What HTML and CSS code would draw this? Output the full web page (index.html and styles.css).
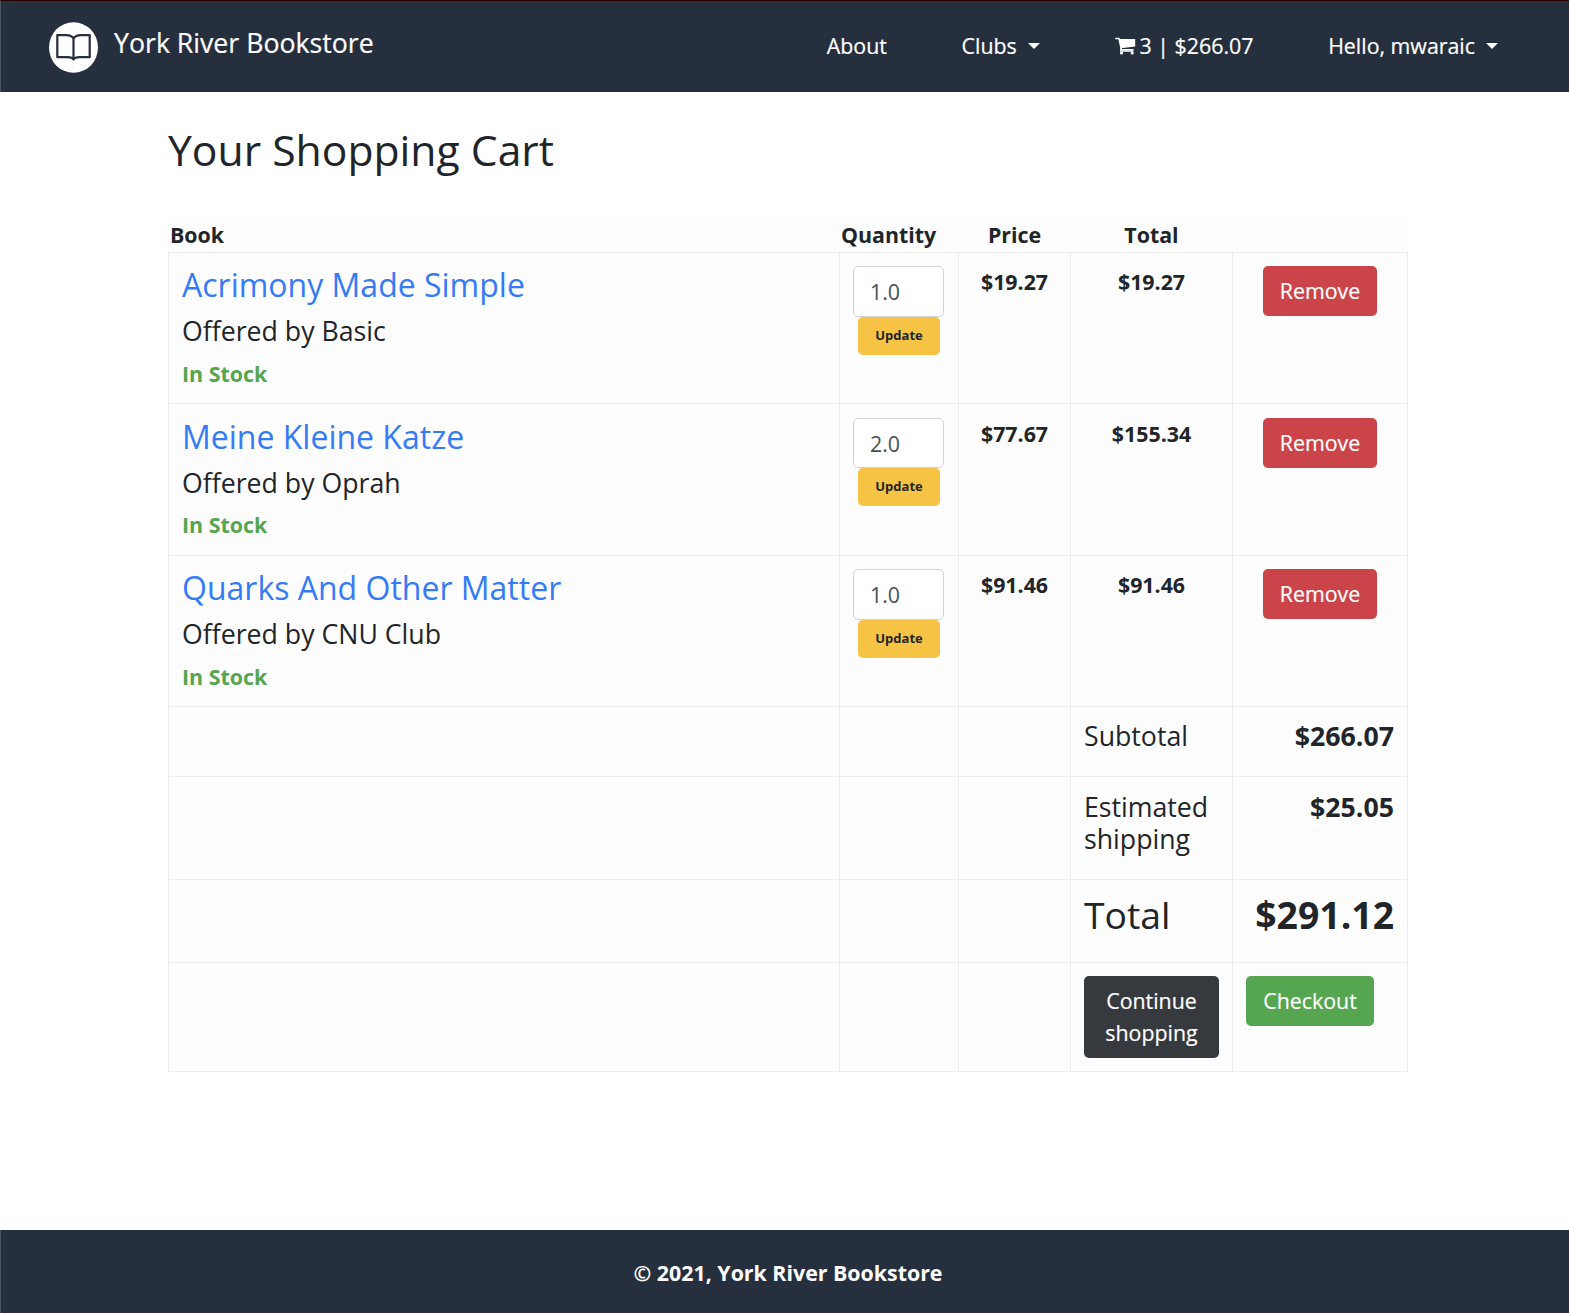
FILE: index.html
```html
<!DOCTYPE html>
<html lang="en">
<head>
<meta charset="utf-8">
<title>York River Bookstore</title>
<link rel="stylesheet" href="styles.css">
</head>
<body>
<header class="navbar">
  <a class="brand">
    <svg class="logo" width="50" height="52" viewBox="0 0 50 52"><ellipse cx="25.500" cy="25.500" rx="24.5" ry="25.3" fill="#fff"/><path d="M25.500 17C24.500 14 21.500 13.100 18 13.100H9.300V35.200H19.500C22.500 35.200 24.500 35.700 25.500 37.500C26.500 35.700 28.500 35.200 31.500 35.200H41.700V13.100H33C29.500 13.100 26.500 14 25.500 17V37" fill="none" stroke="#262f3e" stroke-width="2.200" stroke-linejoin="round"/></svg>
    <span class="brand-name">York River Bookstore</span>
  </a>
  <nav class="links">
    <a>About</a>
    <a class="clubs">Clubs<i class="caret"></i></a>
    <a class="cart"><svg class="cart-icon" width="21" height="19" viewBox="0 0 21 19"><path d="M.7 1.500H4L6.400 12.700H18" fill="none" stroke="#fff" stroke-width="1.500" stroke-linejoin="round" stroke-linecap="round"/><path d="M4 2H20.200V9.500L6 11.200Z" fill="#fff"/><path d="M6 11 5.600 14H18.500" fill="none" stroke="#fff" stroke-width="1.300"/><circle cx="6.500" cy="16" r="1.600" fill="#fff"/><circle cx="17.200" cy="16" r="1.600" fill="#fff"/></svg><span>3 | $266.07</span></a>
    <a class="user">Hello, mwaraic<i class="caret"></i></a>
  </nav>
</header>
<main class="content">
  <h2 class="title">Your Shopping Cart</h2>
  <table class="cart-table">
    <colgroup><col class="c-book"><col class="c-qty"><col class="c-price"><col class="c-total"><col class="c-action"></colgroup>
    <thead><tr><th class="left book">Book</th><th class="left">Quantity</th><th>Price</th><th>Total</th><th></th></tr></thead>
    <tbody>
      <tr class="item">
        <td><h4>Acrimony Made Simple</h4><h5>Offered by Basic</h5><strong class="stock">In Stock</strong></td>
        <td><input class="qty" value="1.0"><button class="btn update">Update</button></td>
        <td class="money">$19.27</td><td class="money">$19.27</td>
        <td class="action"><button class="btn remove">Remove</button></td>
      </tr>
      <tr class="item second">
        <td><h4>Meine Kleine Katze</h4><h5>Offered by Oprah</h5><strong class="stock">In Stock</strong></td>
        <td><input class="qty" value="2.0"><button class="btn update">Update</button></td>
        <td class="money">$77.67</td><td class="money">$155.34</td>
        <td class="action"><button class="btn remove">Remove</button></td>
      </tr>
      <tr class="item">
        <td><h4>Quarks And Other Matter</h4><h5>Offered by CNU Club</h5><strong class="stock">In Stock</strong></td>
        <td><input class="qty" value="1.0"><button class="btn update">Update</button></td>
        <td class="money">$91.46</td><td class="money">$91.46</td>
        <td class="action"><button class="btn remove">Remove</button></td>
      </tr>
      <tr class="subtotal"><td></td><td></td><td></td><td><h5>Subtotal</h5></td><td class="right"><h5><strong>$266.07</strong></h5></td></tr>
      <tr class="shipping"><td></td><td></td><td></td><td><h5>Estimated shipping</h5></td><td class="right"><h5><strong>$25.05</strong></h5></td></tr>
      <tr class="grand"><td></td><td></td><td></td><td><h3>Total</h3></td><td class="right"><h3><strong>$291.12</strong></h3></td></tr>
      <tr class="buttons"><td></td><td></td><td></td><td><button class="btn continue">Continue shopping</button></td><td><button class="btn checkout">Checkout</button></td></tr>
    </tbody>
  </table>
</main>
<footer class="footer">© 2021, York River Bookstore</footer>
</body>
</html>
```
FILE: styles.css
```css
* { box-sizing: border-box; }
body {
  margin: 0;
  height: 1313px;
  display: flex;
  flex-direction: column;
  font-family: "Open Sans", sans-serif;
  font-size: 21.36px;
  line-height: 32px;
  color: #212529;
  background: #fff;
}
.navbar {
  height: 92px;
  flex: none;
  display: flex;
  align-items: flex-start;
  justify-content: space-between;
  padding: 0 71px 0 47px;
  background: #262f3e;
  border-top: 1px solid #2d0000;
  border-left: 1px solid #4b5561;
  color: #fff;
  -webkit-text-stroke: 0.2px #fff;
}
.brand { display: flex; padding-top: 21px; }
.brand-name { font-size: 26.7px; margin-left: 16px; line-height: 42px; }
.links { display: flex; padding-top: 29px; white-space: nowrap; }
.links a { display: flex; align-items: center; margin-left: 74.7px; }
.caret {
  margin-left: 11px;
  border: 6px solid transparent;
  border-top-color: #fff;
  border-bottom: 0;
}
.cart-icon { margin-right: 4px; }
.content { flex: 1; padding: 36px 161px 0 168px; }
h2, h3, h4, h5 { margin: 0 0 11px; font-weight: 400; line-height: 1.2; }
.title { font-size: 42.67px; line-height: 44px; margin-bottom: 45px; }
.cart-table {
  width: 1240px;
  table-layout: fixed;
  border-collapse: separate;
  border-spacing: 0;
  background: #fdfdfd;
}
.c-book { width: 672px; }
.c-qty { width: 119px; }
.c-price { width: 112px; }
.c-total { width: 162px; }
.c-action { width: 175px; }
th { height: 36px; padding: 2px 2px 1px 1px; border-bottom: 1px solid #ececed; font-weight: 700; }
.left { text-align: left; }
.book { padding-left: 2px; }
td {
  padding: 13px;
  vertical-align: top;
  border-right: 1px solid #ececed;
  border-bottom: 1px solid #ececed;
}
td:first-child { border-left: 1px solid #ececed; }
.item { height: 151px; }
.item.second { height: 152px; }
.item td { padding-bottom: 0; }
.item.second td { padding-top: 14px; }
h4 { font-size: 32px; line-height: 38px; margin-bottom: 11px; color: #357bf6; }
h5 { font-size: 26.7px; line-height: 32px; }
.item h5 { margin-bottom: 11px; }
.item.second h5 { margin-bottom: 10px; }
h3 { font-size: 37.33px; line-height: 44px; }
.stock { display: block; color: #55a551; }
.money { font-weight: 700; text-align: center; }
.qty {
  display: block;
  width: 91px;
  height: 51px;
  padding: 1px 16px;
  border: 1px solid #ced4da;
  border-radius: 5px;
  background: #fff;
  color: #495057;
  font: 21.36px "Open Sans", sans-serif;
}
.second .qty { height: 50px; }
.btn {
  display: block;
  border: 0;
  border-radius: 5px;
  color: #fff;
  font: 21.36px/32px "Open Sans", sans-serif;
  padding: 9px 0;
  -webkit-text-stroke: 0.2px currentColor;
}
.update { width: 82px; height: 38px; margin-left: 5px; padding: 0 0 2px; background: #f6c344; color: #212529; font-size: 13px; font-weight: 700; -webkit-text-stroke: 0; }
.remove { width: 114px; height: 50px; margin: 0 auto; background: #cb444a; }
.subtotal { height: 70px; }
.shipping { height: 103px; }
.grand { height: 83px; }
.buttons { height: 109px; }
.subtotal td, .shipping td, .grand td { padding-bottom: 0; }
.shipping td { padding-top: 14px; }
.right { text-align: right; }
.continue { width: 135px; height: 82px; padding: 9px 12px; background: #363a3e; }
.checkout { width: 128px; height: 50px; background: #55a551; }
.footer {
  height: 83px;
  flex: none;
  padding: 27px 0 0 6px;
  text-align: center;
  color: #fff;
  font-weight: 700;
  background: #262f3e;
  border-left: 1px solid #4b5561;
}
```
